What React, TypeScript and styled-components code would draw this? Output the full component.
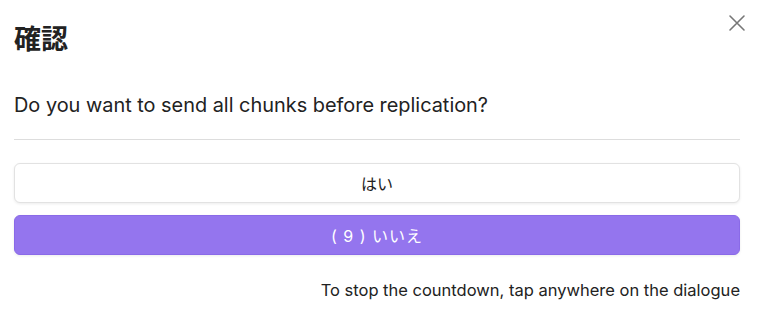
import * as React from "react";
import styled, { createGlobalStyle } from "styled-components";

const GlobalStyle = createGlobalStyle`
  body {
    margin: 0;
    background: #ffffff;
    font-family: Inter, "Noto Sans CJK JP", sans-serif;
    color: #222222;
  }
`;

const Modal = styled.div`
  position: relative;
  width: 760px;
  height: 315px;
  box-sizing: border-box;
  padding: 19px 20px 0 14px;
  background: #ffffff;
`;

const Title = styled.h1`
  margin: 0;
  font-family: "Noto Sans CJK JP", sans-serif;
  font-size: 27px;
  font-weight: 700;
  line-height: 38px;
  color: #222222;
`;

const CloseButton = styled.button`
  position: absolute;
  top: 13px;
  right: 13px;
  width: 20px;
  height: 20px;
  padding: 0;
  border: none;
  background: none;
  display: flex;
  align-items: center;
  justify-content: center;
  color: #777777;
`;

const Message = styled.p`
  margin: 35px 0 0;
  font-family: Inter, sans-serif;
  font-size: 19.9px;
  line-height: 26px;
  color: #222222;
`;

const Divider = styled.hr`
  margin: 21px 0 0;
  border: none;
  border-top: 1px solid #dddddd;
`;

const ButtonList = styled.div`
  display: flex;
  flex-direction: column;
  gap: 12px;
  margin-top: 23px;
`;

const ChoiceButton = styled.button<{ $accent?: boolean }>`
  height: 40px;
  width: 100%;
  border-radius: 6px;
  font-family: Inter, "Noto Sans CJK JP", sans-serif;
  font-size: 16px;
  cursor: pointer;
  border: 1px solid ${(p) => (p.$accent ? "#8a6ae8" : "#e2e2e2")};
  background: ${(p) => (p.$accent ? "#9475ee" : "#ffffff")};
  color: ${(p) => (p.$accent ? "#ffffff" : "#222222")};
  box-shadow: 0 1px 3px rgba(0, 0, 0, 0.08);
  letter-spacing: ${(p) => (p.$accent ? "1px" : "0")};
`;

const Footer = styled.p`
  margin: 25px 0 0;
  text-align: right;
  font-family: Inter, sans-serif;
  font-size: 16.5px;
  line-height: 20px;
  color: #222222;
`;

export default function App() {
  return (
    <>
      <GlobalStyle />
      <Modal>
        <Title>確認</Title>
        <CloseButton aria-label="Close">
          <svg width="18" height="18" viewBox="0 0 18 18" fill="none">
            <path d="M2 2L16 16M16 2L2 16" stroke="currentColor" strokeWidth="1.6" strokeLinecap="round" />
          </svg>
        </CloseButton>
        <Message>Do you want to send all chunks before replication?</Message>
        <Divider />
        <ButtonList>
          <ChoiceButton>はい</ChoiceButton>
          <ChoiceButton $accent>( 9 ) いいえ</ChoiceButton>
        </ButtonList>
        <Footer>To stop the countdown, tap anywhere on the dialogue</Footer>
      </Modal>
    </>
  );
}
